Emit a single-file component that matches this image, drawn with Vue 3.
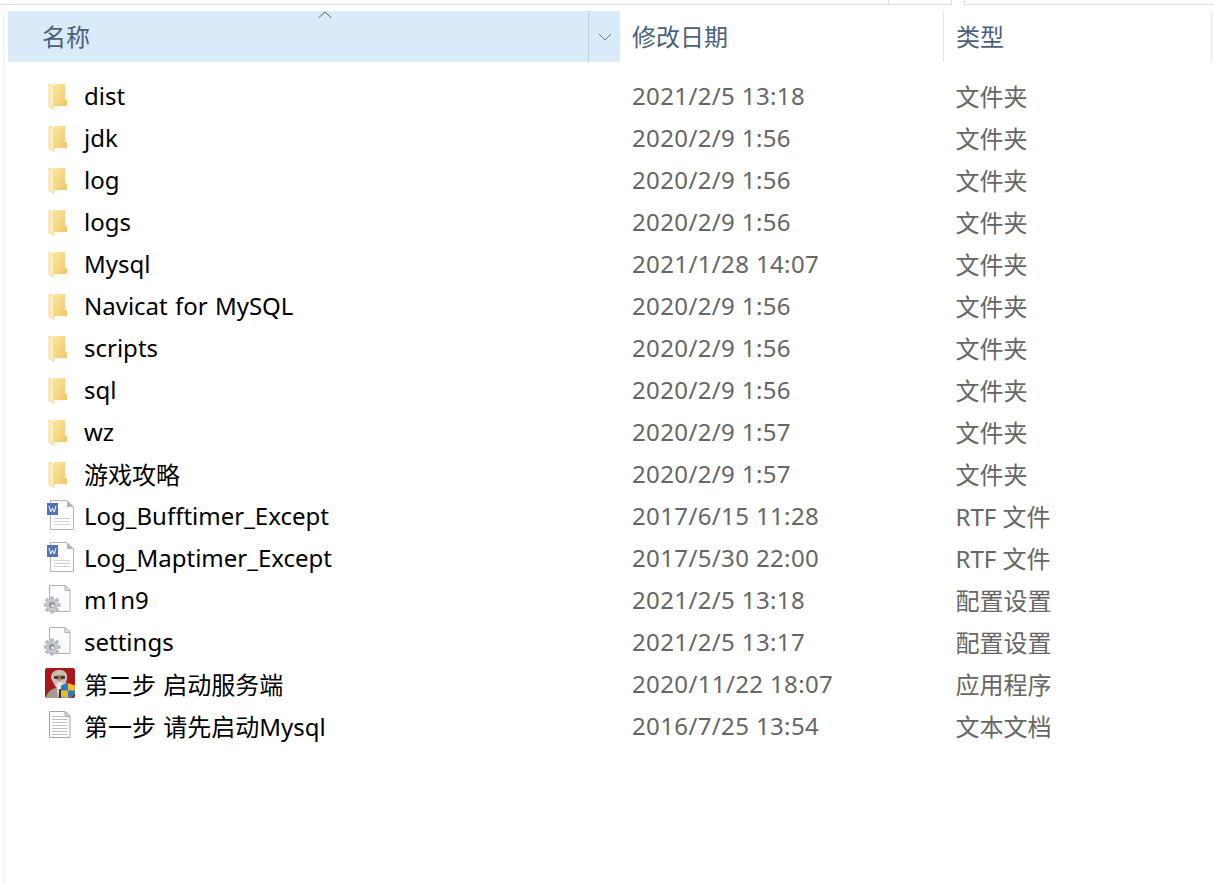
<script setup>
const rows = [
  { name: 'dist', date: '2021/2/5 13:18', type: '文件夹', icon: 'folder' },
  { name: 'jdk', date: '2020/2/9 1:56', type: '文件夹', icon: 'folder' },
  { name: 'log', date: '2020/2/9 1:56', type: '文件夹', icon: 'folder' },
  { name: 'logs', date: '2020/2/9 1:56', type: '文件夹', icon: 'folder' },
  { name: 'Mysql', date: '2021/1/28 14:07', type: '文件夹', icon: 'folder' },
  { name: 'Navicat for MySQL', date: '2020/2/9 1:56', type: '文件夹', icon: 'folder' },
  { name: 'scripts', date: '2020/2/9 1:56', type: '文件夹', icon: 'folder' },
  { name: 'sql', date: '2020/2/9 1:56', type: '文件夹', icon: 'folder' },
  { name: 'wz', date: '2020/2/9 1:57', type: '文件夹', icon: 'folder' },
  { name: '游戏攻略', date: '2020/2/9 1:57', type: '文件夹', icon: 'folder' },
  { name: 'Log_Bufftimer_Except', date: '2017/6/15 11:28', type: 'RTF 文件', icon: 'word' },
  { name: 'Log_Maptimer_Except', date: '2017/5/30 22:00', type: 'RTF 文件', icon: 'word' },
  { name: 'm1n9', date: '2021/2/5 13:18', type: '配置设置', icon: 'config' },
  { name: 'settings', date: '2021/2/5 13:17', type: '配置设置', icon: 'config' },
  { name: '第二步 启动服务端', date: '2020/11/22 18:07', type: '应用程序', icon: 'app' },
  { name: '第一步 请先启动Mysql', date: '2016/7/25 13:54', type: '文本文档', icon: 'text' },
]
const gearTeeth = [0, 45, 90, 135, 180, 225, 270, 315]
</script>

<template>
  <div class="window">
    <svg class="defs" width="0" height="0" aria-hidden="true">
      <defs>
        <linearGradient id="folderBack" x1="0" y1="0" x2="1" y2="1">
          <stop offset="0" stop-color="#fbe6a2" />
          <stop offset="1" stop-color="#f0c766" />
        </linearGradient>
      </defs>
    </svg>
    <div class="topbar">
      <div class="seg seg-main"><span class="seg-tick"></span></div>
      <div class="seg seg-rest"></div>
    </div>
    <div class="pane">
      <div class="header">
        <div class="h-name">
          <span class="h-label">名称</span>
          <svg class="sort" width="16" height="8" viewBox="0 0 16 8">
            <path d="M1.5 7 L8 1 L14.5 7" fill="none" stroke="#5f6670" stroke-width="1" />
          </svg>
          <span class="split">
            <svg width="14" height="8" viewBox="0 0 14 8">
              <path d="M1 1 L7 7 L13 1" fill="none" stroke="#6b7480" stroke-width="1" />
            </svg>
          </span>
        </div>
        <div class="h-date">修改日期</div>
        <div class="h-type">类型</div>
      </div>
      <div class="list">
        <div v-for="r in rows" :key="r.name" class="row">
          <div class="c-name">
            <svg class="icon" width="32" height="32" viewBox="0 0 32 32">
              <template v-if="r.icon === 'folder'">
                <path d="M10 4 H21 V20 H23 V26 H10 Z" fill="url(#folderBack)" />
                <path d="M21 4 V20 H23" fill="none" stroke="#f3d582" stroke-width="0.6" />
                <path d="M5 4 L10 6.5 V29.5 L5 26.5 Z" fill="#fdedb4" stroke="#efcd72" stroke-width="0.7" />
              </template>
              <template v-else-if="r.icon === 'word'">
                <path d="M6.5 0.5 H23 L29.5 7 V29.5 H6.5 Z" fill="#fff" stroke="#b4b4b4" />
                <path d="M23 0.5 L29.5 7 H23 Z" fill="#b4b4b4" />
                <path d="M10 18.5 H26 M10 21.5 H26 M10 24.5 H26" stroke="#d2d2d2" />
                <rect x="3" y="3" width="11" height="12" fill="#4f73b8" />
                <path d="M5 6 L6.7 12 L8.5 8 L10.3 12 L12 6" fill="none" stroke="#fff" />
              </template>
              <template v-else-if="r.icon === 'config'">
                <path d="M5.5 1.5 H21 L26 6.5 V27.5 H5.5 Z" fill="#fafbfc" stroke="#b0b0b0" />
                <path d="M21 1.5 L26 6.5 H21 Z" fill="#e6e6e6" stroke="#b0b0b0" />
                <g transform="translate(8 21)">
                  <rect
                    v-for="a in gearTeeth"
                    :key="a"
                    x="-1.8"
                    y="-8.5"
                    width="3.6"
                    height="4.5"
                    fill="#b5b9bd"
                    :transform="`rotate(${a})`"
                  />
                  <circle r="6" fill="#c4c8cc" />
                  <circle r="3" fill="#8f9499" />
                  <circle cx="0.8" cy="0.8" r="1.6" fill="#e8eaec" />
                </g>
              </template>
              <template v-else-if="r.icon === 'app'">
                <rect x="1" y="0" width="30" height="30" rx="2" fill="#a8181b" />
                <path d="M2 30 C3 24 7 21 12 20 L20 20 C24 21 26 25 27 30 Z" fill="#a39a90" />
                <path d="M13 20 H19 L18 30 H14 Z" fill="#e4dfd6" />
                <path d="M15.2 21 H16.8 L17.4 30 H14.6 Z" fill="#3a2a24" />
                <path d="M7 10 C7 3 12 2 16 2 C20 2 24 5 23 11 L21 18 C19 22 13 22 11 18 Z" fill="#c8c0b6" />
                <path d="M10.5 9 C12 14 19 14 21 9 L20 7 H12 Z" fill="#b08a72" />
                <path d="M10 9.5 H14.5 M16.5 9.5 H21" stroke="#2a1c16" stroke-width="1.8" />
                <path d="M12 16 C14 13.5 17 13.5 19 16 L17.5 21 H13.5 Z" fill="#eae6df" />
                <path d="M24 15 L31 17.5 V23 C31 26.5 28 29 24 30 C20 29 17 26.5 17 23 V17.5 Z" fill="#f5b921" />
                <path d="M24 15 V22.5 H17 V17.5 Z M24 22.5 H31 V23 C31 26.5 28 29 24 30 Z" fill="#2b78cc" />
              </template>
              <template v-else>
                <path d="M5.5 1.5 H21 L26 6.5 V27.5 H5.5 Z" fill="#fff" stroke="#a5a5a5" />
                <path d="M21 1.5 L26 6.5 H21 Z" fill="#dcdcdc" stroke="#a5a5a5" />
                <path d="M8 6.5 H19 M8 9.5 H23.5 M8 12.5 H23.5 M8 15.5 H23.5 M8 18.5 H23.5 M8 21.5 H23.5 M8 24.5 H23.5" stroke="#bdbdbd" />
              </template>
            </svg>
            <span class="name">{{ r.name }}</span>
          </div>
          <div class="c-date">{{ r.date }}</div>
          <div class="c-type">{{ r.type }}</div>
        </div>
      </div>
    </div>
  </div>
</template>

<style scoped>
.window {
  width: 1214px;
  height: 883px;
  overflow: hidden;
  background: #fff;
  font-family: "Noto Sans", "Noto Sans CJK SC", sans-serif;
  font-size: 24px;
}
.defs {
  position: absolute;
}
.topbar {
  display: flex;
  height: 5px;
}
.seg {
  height: 4px;
  border-bottom: 1px solid #dcdcdc;
  box-sizing: content-box;
}
.seg-main {
  width: 951px;
  display: flex;
  justify-content: flex-end;
  border-right: 1px solid #dcdcdc;
}
.seg-tick {
  width: 62px;
  height: 4px;
  border-left: 1px solid #dcdcdc;
}
.seg-rest {
  margin-left: 12px;
  flex: 1;
  border-left: 1px solid #dcdcdc;
}
.pane {
  margin: 6px 0 0 3px;
  height: 872px;
  border-left: 1px solid #f0f0f0;
  padding-left: 4px;
}
.header {
  display: grid;
  grid-template-columns: 612px 324px 268px;
  grid-template-rows: 51px;
  height: 51px;
  color: #4c607a;
}
.h-name {
  position: relative;
  display: flex;
  align-items: center;
  justify-content: space-between;
  background: #d9ebf9;
  padding-left: 34px;
}
.h-label,
.h-date,
.h-type {
  line-height: 52px;
}
.sort {
  position: absolute;
  left: 309px;
  top: 0;
}
.split {
  width: 31px;
  height: 51px;
  border-left: 1px solid #bcd0e2;
  display: flex;
  align-items: center;
  justify-content: center;
}
.h-date {
  padding-left: 12px;
  border-right: 1px solid #e5e5e5;
}
.h-type {
  padding-left: 12px;
  border-right: 1px solid #e5e5e5;
}
.list {
  padding-top: 13px;
}
.row {
  display: grid;
  grid-template-columns: 624px 323.5px 1fr;
  height: 42px;
  align-items: center;
}
.c-name {
  display: flex;
  align-items: center;
  gap: 8px;
  padding-left: 36px;
  color: #000;
  white-space: nowrap;
}
.icon {
  flex: none;
}
.name {
  padding-bottom: 2px;
  word-spacing: 1px;
}
.c-date,
.c-type {
  color: #666;
  white-space: nowrap;
  padding-bottom: 2px;
}
.c-date {
  letter-spacing: 0.37px;
}
</style>

<style>
html,
body {
  margin: 0;
  background: #fff;
}
</style>
